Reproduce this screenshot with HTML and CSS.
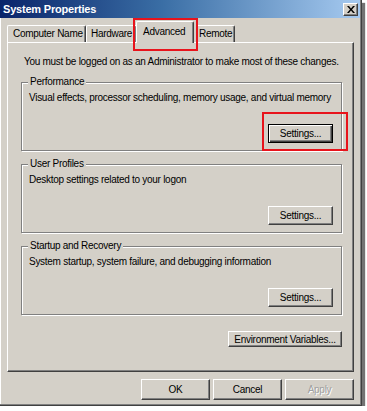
FILE: index.html
```html
<!DOCTYPE html>
<html>
<head>
<meta charset="utf-8">
<link rel="stylesheet" href="styles.css">
</head>
<body>
<div class="window">
  <div class="titlebar">
    <span class="title">System Properties</span>
    <span class="close"><svg width="8" height="7" viewBox="0 0 8 7"><path d="M0 0h2l2 2.5L6 0h2L5 3.5 8 7H6L4 4.5 2 7H0l3-3.5z" fill="#000"/></svg></span>
  </div>
  <div class="client">
    <div class="tabs">
      <div class="tab first">Computer Name</div>
      <div class="tab second">Hardware</div>
      <div class="tab active">Advanced</div>
      <div class="tab last">Remote</div>
    </div>
    <div class="panel">
      <p class="intro">You must be logged on as an Administrator to make most of these changes.</p>
      <div class="group">
        <div class="group-title">Performance</div>
        <div class="group-desc">Visual effects, processor scheduling, memory usage, and virtual memory</div>
        <div class="group-actions"><span class="btn default">Settings...</span></div>
      </div>
      <div class="group">
        <div class="group-title">User Profiles</div>
        <div class="group-desc">Desktop settings related to your logon</div>
        <div class="group-actions"><span class="btn">Settings...</span></div>
      </div>
      <div class="group">
        <div class="group-title">Startup and Recovery</div>
        <div class="group-desc">System startup, system failure, and debugging information</div>
        <div class="group-actions"><span class="btn">Settings...</span></div>
      </div>
      <div class="env-row"><span class="btn env">Environment Variables...</span></div>
    </div>
    <div class="dialog-buttons">
      <span class="btn big">OK</span>
      <span class="btn big">Cancel</span>
      <span class="btn big disabled">Apply</span>
    </div>
  </div>
  <div class="mark mark-tab"></div>
  <div class="mark mark-settings"></div>
</div>
</body>
</html>
```
FILE: styles.css
```css
* { box-sizing: border-box; }
html, body { margin: 0; padding: 0; background: #ffffff; }
body {
  font-family: "Liberation Sans", Arial, sans-serif;
  font-size: 10px;
  letter-spacing: -0.28px;
  color: #000;
}
.window {
  position: relative;
  width: 362px;
  height: 406px;
  background: #d4d0c8;
  border-right: 1px solid #404040;
  border-bottom: 1px solid #404040;
  box-shadow: inset -1px -1px 0 #808080, inset 1px 1px 0 #ffffff, 3px 3px 1px rgba(0,0,0,0.55);
  display: flex;
  flex-direction: column;
}
.titlebar {
  height: 18px;
  margin: 0 1px 0 0;
  background: linear-gradient(to right, #0a246a, #3a6ea5 45%, #a6caf0);
  display: flex;
  align-items: center;
  justify-content: space-between;
  padding: 0 2px 0 3px;
}
.title {
  color: #fff;
  font-weight: bold;
  font-size: 11px;
  letter-spacing: -0.2px;
}
.close {
  width: 15px;
  height: 13px;
  background: #d4d0c8;
  border: 1px solid;
  border-color: #fff #404040 #404040 #fff;
  box-shadow: inset -1px -1px 0 #808080;
  display: flex;
  align-items: center;
  justify-content: center;
}
.client {
  padding: 3px 7px 0 7px;
  display: flex;
  flex-direction: column;
}
.tabs {
  display: flex;
  align-items: flex-end;
  height: 21px;
  position: relative;
  z-index: 1;
}
.tab {
  height: 17px;
  padding: 0 4px 0 5px;
  line-height: 15px;
  border: 1px solid #fff;
  border-bottom: none;
  border-right: 1px solid #404040;
  box-shadow: inset -1px 0 0 #808080;
  border-radius: 2px 2px 0 0;
  white-space: nowrap;
  background: #d4d0c8;
}
.tab.first { width: 79px; padding-left: 5px; }
.tab.second { width: 51px; padding-left: 4px; }
.tab.active {
  width: 58px;
  margin: 0 -2px -1px -1px;
  padding-left: 6px;
  line-height: 19px;
  position: relative;
  z-index: 2;
  height: 22px;
}
.tab.last { width: 39px; margin-left: 4px; padding-left: 2px; }
.panel {
  height: 330px;
  border: 1px solid;
  border-color: #fff #404040 #404040 #fff;
  box-shadow: inset -1px -1px 0 #808080;
  padding: 13px 11px 0 13px;
  display: flex;
  flex-direction: column;
}
.intro {
  margin: 0 0 14px 3px;
  line-height: 12px;
  white-space: nowrap;
}
.group {
  border: 1px solid #808080;
  box-shadow: inset 1px 1px 0 #fff, 1px 1px 0 #fff;
  padding: 0 8px 7px 7px;
  margin-bottom: 13px;
  height: 69px;
  display: flex;
  flex-direction: column;
}
.group-title {
  margin: -7px 0 0 -1px;
  padding: 0 2px;
  line-height: 12px;
  background: #d4d0c8;
  align-self: flex-start;
}
.group-desc {
  margin-top: 4px;
  line-height: 12px;
  white-space: nowrap;
}
.group-actions {
  margin-top: auto;
  display: flex;
  justify-content: flex-end;
}
.btn {
  display: inline-flex;
  align-items: center;
  justify-content: center;
  height: 19px;
  width: 65px;
  background: #d4d0c8;
  border: 1px solid;
  border-color: #fff #404040 #404040 #fff;
  box-shadow: inset -1px -1px 0 #808080;
  white-space: nowrap;
}
.btn.default {
  border: 1px solid #000;
  box-shadow: inset 1px 1px 0 #fff, inset -1px -1px 0 #404040, inset -2px -2px 0 #808080;
}
.env-row {
  display: flex;
  justify-content: flex-end;
  margin-top: 3px;
}
.btn.env { width: 114px; height: 16px; }
.dialog-buttons {
  display: flex;
  justify-content: flex-end;
  gap: 3px;
  margin-top: 7px;
}
.btn.big { width: 69px; height: 21px; }
.btn.disabled { color: #a0a0a0; text-shadow: 1px 1px 0 #fff; }
.mark {
  position: absolute;
  border: 2px solid #e8141c;
  z-index: 5;
}
.mark-tab { left: 133px; top: 18px; width: 65px; height: 33px; }
.mark-settings { left: 262px; top: 112px; width: 86px; height: 39px; }
```
